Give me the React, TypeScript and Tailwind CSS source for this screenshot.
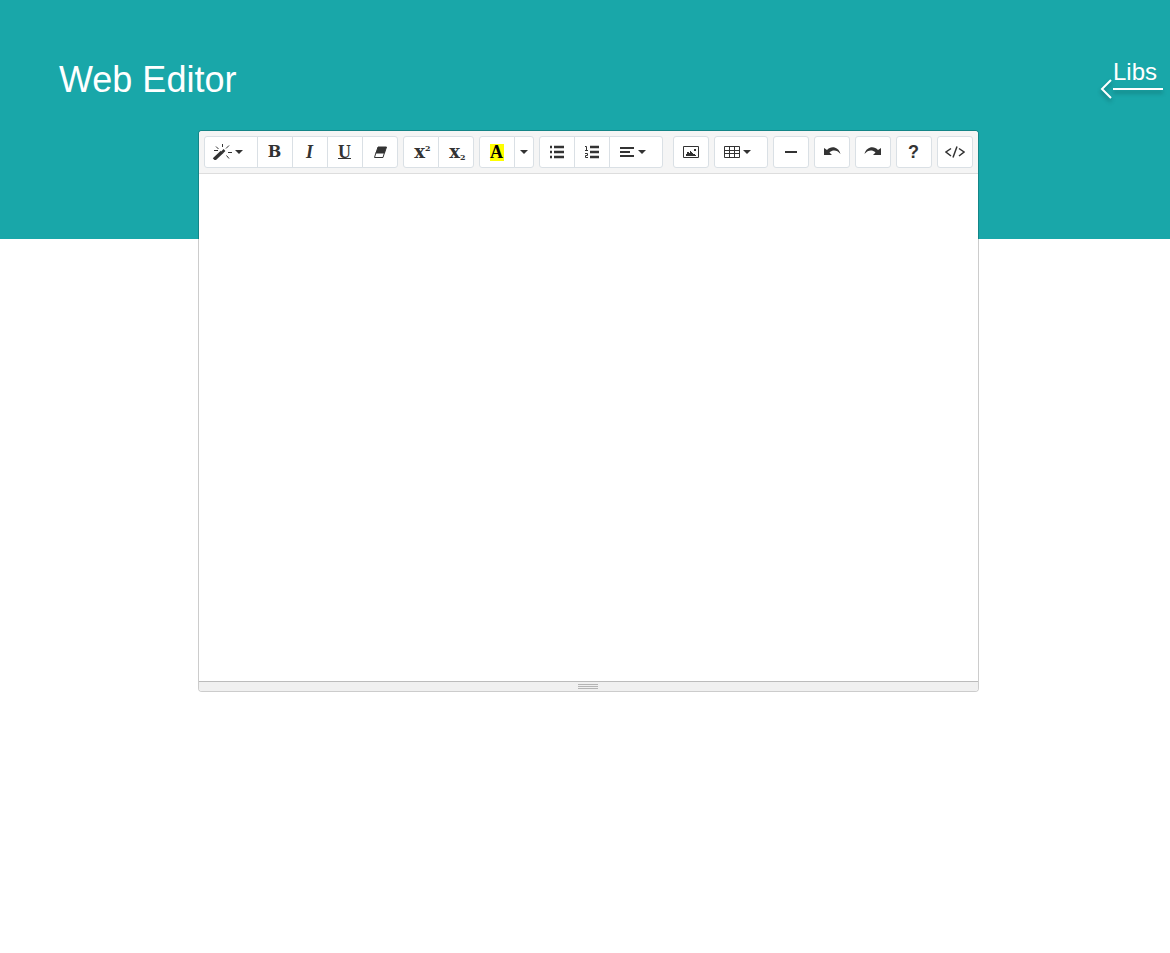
import type { ReactNode } from "react";

type ButtonProps = {
  label: string;
  menu?: boolean;
  narrow?: boolean;
  children?: ReactNode;
};

function Caret() {
  return (
    <svg width="8" height="4" viewBox="0 0 8 4" fill="currentColor" aria-hidden="true">
      <path d="M0 0h8L4 4z" />
    </svg>
  );
}

function ToolButton({ label, menu, narrow, children }: ButtonProps) {
  const width = narrow ? "w-5 pr-px" : menu ? "w-[54px] pr-2" : "w-9 pr-px";
  return (
    <button
      type="button"
      aria-label={label}
      title={label}
      className={`-ml-px flex h-8 items-center justify-center gap-[3px] border border-[#dae0e5] bg-white text-[#333] first:ml-0 first:rounded-l-[3px] last:rounded-r-[3px] hover:bg-gray-100 ${width}`}
    >
      {children}
      {(menu || narrow) && <Caret />}
    </button>
  );
}

function Group({ children }: { children: ReactNode }) {
  return <div className="flex">{children}</div>;
}

function Icon({ children, width = 16 }: { children: ReactNode; width?: number }) {
  return (
    <svg
      width={width}
      height="16"
      viewBox={`0 0 ${width} 16`}
      fill="none"
      stroke="currentColor"
      aria-hidden="true"
    >
      {children}
    </svg>
  );
}

function Toolbar() {
  return (
    <div
      role="toolbar"
      aria-label="Formatting"
      className="flex flex-wrap gap-[5px] border-b border-[#ddd] bg-[#f5f5f5] p-[5px]"
    >
      <Group>
        <ToolButton label="Style" menu>
          <Icon width={20}>
            <path d="M2 15.500 10 8" strokeWidth="3.500" />
            <path d="M10 8.500 12.500 6" strokeWidth="2.500" />
            <path d="M4 2.500 6.500 5M10.500 0v3M17 1.500 14 4.500M16 8.500h4M14.500 11.500l2.500 3M2 6.500h4" />
          </Icon>
        </ToolButton>
        <ToolButton label="Bold">
          <span className="font-['DejaVu_Serif',serif] text-base leading-4 font-bold">B</span>
        </ToolButton>
        <ToolButton label="Italic">
          <span className="font-['Liberation_Serif',serif] text-lg leading-4 font-bold italic">I</span>
        </ToolButton>
        <ToolButton label="Underline">
          <span className="border-b border-current font-['Liberation_Serif',serif] text-lg leading-3 font-bold">
            U
          </span>
        </ToolButton>
        <ToolButton label="Remove Font Style">
          <Icon>
            <path d="M6 3h8.500l-2 6H4z" fill="currentColor" />
            <path d="M4 8.500 2.500 13.500h8.500L12.500 8.500" />
          </Icon>
        </ToolButton>
      </Group>
      <Group>
        <ToolButton label="Superscript">
          <span className="flex pl-1 font-['DejaVu_Serif',serif] text-lg leading-4 font-bold">
            x<span className="text-[8px] leading-[8px]">2</span>
          </span>
        </ToolButton>
        <ToolButton label="Subscript">
          <span className="flex items-end pl-1 font-['DejaVu_Serif',serif] text-lg leading-4 font-bold">
            x<span className="text-[8px] leading-[6px]">2</span>
          </span>
        </ToolButton>
      </Group>
      <Group>
        <ToolButton label="Recent Color">
          <span className="w-[14px] bg-[#ff0] text-center font-['Liberation_Serif',serif] text-lg leading-[17px] font-bold text-black">
            A
          </span>
        </ToolButton>
        <ToolButton label="More Color" narrow />
      </Group>
      <Group>
        <ToolButton label="Unordered list">
          <Icon>
            <path d="M1 3h2M1 8h2M1 13h2M5 3h10M5 8h10M5 13h10" strokeWidth="2.500" />
          </Icon>
        </ToolButton>
        <ToolButton label="Ordered list">
          <Icon>
            <path d="M6 3h9M6 8h9M6 13h9" strokeWidth="2.500" />
            <path d="M1 2.500h1.500v4M1 6.500h3M1 9.500h2.500v2H1.500v2H4" />
          </Icon>
        </ToolButton>
        <ToolButton label="Paragraph" menu>
          <Icon>
            <path d="M1 4h14M1 8h10M1 12h14" strokeWidth="2" />
          </Icon>
        </ToolButton>
      </Group>
      <div className="ml-[5px] flex">
        <ToolButton label="Picture">
          <Icon>
            <path d="M.5 2.500h15v11H.5z" />
            <path d="M3 12v-2h1V8h2v1h1V7h1v1h1v1h1v1h2v1h1v1zM11 5h2v2h-2z" fill="currentColor" stroke="none" />
          </Icon>
        </ToolButton>
      </div>
      <Group>
        <ToolButton label="Table" menu>
          <Icon>
            <path d="M.5 2.500h15v11H.5zM.5 6.500h15M.5 9.500h15M5.500 2.500v11M10.500 2.500v11" />
          </Icon>
        </ToolButton>
      </Group>
      <Group>
        <ToolButton label="Insert Horizontal Rule">
          <Icon>
            <path d="M2 8h12" strokeWidth="2" />
          </Icon>
        </ToolButton>
      </Group>
      <Group>
        <ToolButton label="Undo">
          <Icon width={18}>
            <path d="M1 4v7h8L6.500 8.500C10 5.500 14 6 17.500 10 15.500 2.500 8 1.500 4 6z" fill="currentColor" stroke="none" />
          </Icon>
        </ToolButton>
      </Group>
      <Group>
        <ToolButton label="Redo">
          <Icon width={18}>
            <path d="M17 4v7H9l2.500-2.500C8 5.500 4 6 .5 10 2.500 2.500 10 1.500 14 6z" fill="currentColor" stroke="none" />
          </Icon>
        </ToolButton>
      </Group>
      <Group>
        <ToolButton label="Help">
          <span className="font-['Liberation_Sans',sans-serif] text-lg leading-4 font-bold">?</span>
        </ToolButton>
      </Group>
      <Group>
        <ToolButton label="Code View">
          <Icon width={20}>
            <path d="M6 4.500 1 8l5 4M14 4.500 19 8l-5 4M12 2.500 8 13.500" strokeWidth="1.500" />
          </Icon>
        </ToolButton>
      </Group>
    </div>
  );
}

export default function App() {
  return (
    <div className="min-h-screen bg-white font-['Liberation_Sans',sans-serif]">
      <header className="flex h-[239px] items-start justify-between bg-[#19a7a9] pr-[7px] pl-[59px] text-white">
        <h1 className="pt-[60px] text-4xl leading-10">Web Editor</h1>
        <a href="#libs" className="flex flex-col items-end pt-[58px]">
          <span className="pr-1.5 text-2xl leading-7">Libs</span>
          <svg
            width="64"
            height="24"
            viewBox="0 0 64 24"
            fill="none"
            stroke="white"
            strokeWidth="2"
            className="-mt-2 drop-shadow-[0_3px_2px_rgba(0,0,0,0.3)]"
            aria-hidden="true"
          >
            <path d="M14 11h50M12 2 3 11l9 9" />
          </svg>
        </a>
      </header>
      <main className="-mt-[109px] mr-[191px] ml-[198px] overflow-hidden rounded-[4px] border border-black/20 bg-white bg-clip-padding">
        <Toolbar />
        <div
          contentEditable
          role="textbox"
          aria-multiline="true"
          aria-label="Document"
          className="min-h-[507px] p-[10px] text-sm outline-none"
        />
        <div
          role="separator"
          aria-label="Resize"
          className="flex h-[10px] flex-col items-center gap-px border-t border-[#bbb] bg-[#f0f0f0] pt-[2px] pr-px"
        >
          <span className="h-px w-5 bg-[#b5b5b5]" />
          <span className="h-px w-5 bg-[#b5b5b5]" />
          <span className="h-px w-5 bg-[#b5b5b5]" />
        </div>
      </main>
    </div>
  );
}
